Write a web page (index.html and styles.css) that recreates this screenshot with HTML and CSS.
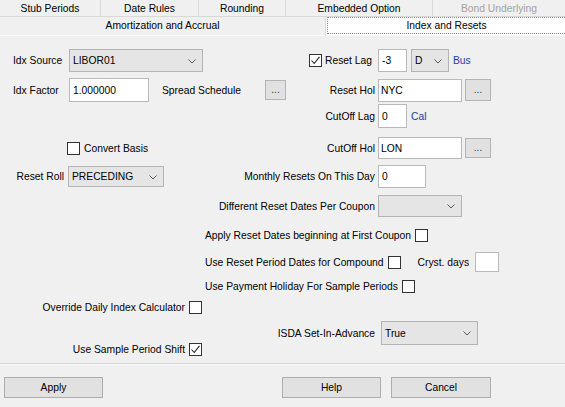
FILE: index.html
```html
<!DOCTYPE html>
<html>
	<head>
		<meta charset="UTF-8">
		<title>Index and Resets</title>
		<link rel="stylesheet" href="styles.css">
	</head>
	<body>
		<div class="tabs">
			<div class="tab_row tab_row--top">
				<div class="tab tab--stub">Stub Periods</div>
				<div class="tab tab--dates">Date Rules</div>
				<div class="tab tab--round">Rounding</div>
				<div class="tab tab--embedded">Embedded Option</div>
				<div class="tab tab--bond tab--disabled">Bond Underlying</div>
			</div>
			<div class="tab_row tab_row--bottom">
				<div class="tab tab--amort">Amortization and Accrual</div>
				<div class="tab tab--active"><span class="focus_box">Index and Resets</span></div>
			</div>
		</div>

		<div class="panel">
			<div class="row row--a">
				<div class="lead">
					<span class="lbl">Idx Source</span>
					<div class="combo combo--source">LIBOR01<svg class="chev" width="8" height="5" viewBox="0 0 8 5"><path d="M0.5 0.5 L4 4 L7.5 0.5" fill="none" stroke="#5a5a5a" stroke-width="1"/></svg></div>
					<div class="side_lbl side_lbl--check">
						<span class="chk"><svg width="11" height="11" viewBox="0 0 11 11"><path d="M1.5 5.5 L4.2 8.5 L9.5 1.8" fill="none" stroke="#222" stroke-width="1.1"/></svg></span>
						Reset Lag
					</div>
				</div>
				<div class="ctrls">
					<div class="field field--lag">-3</div>
					<div class="combo combo--unit">D<svg class="chev" width="8" height="5" viewBox="0 0 8 5"><path d="M0.5 0.5 L4 4 L7.5 0.5" fill="none" stroke="#5a5a5a" stroke-width="1"/></svg></div>
					<span class="note">Bus</span>
				</div>
			</div>

			<div class="row row--b">
				<div class="lead">
					<span class="lbl">Idx Factor</span>
					<div class="field field--factor">1.000000</div>
					<span class="lbl lbl--spread">Spread Schedule</span>
					<div class="btn_dots btn_dots--small">...</div>
					<span class="side_lbl">Reset Hol</span>
				</div>
				<div class="ctrls">
					<div class="field field--hol">NYC</div>
					<div class="btn_dots">...</div>
				</div>
			</div>

			<div class="row row--c">
				<div class="lead">
					<span class="side_lbl">CutOff Lag</span>
				</div>
				<div class="ctrls">
					<div class="field field--cutlag">0</div>
					<span class="note">Cal</span>
				</div>
			</div>

			<div class="row row--d">
				<div class="lead">
					<div class="check_item check_item--basis"><span class="chk"></span>Convert Basis</div>
					<span class="side_lbl">CutOff Hol</span>
				</div>
				<div class="ctrls">
					<div class="field field--lon">LON</div>
					<div class="btn_dots btn_dots--flat">...</div>
				</div>
			</div>

			<div class="row row--e">
				<div class="lead">
					<span class="lbl lbl--right">Reset Roll</span>
					<div class="combo combo--roll">PRECEDING<svg class="chev" width="8" height="5" viewBox="0 0 8 5"><path d="M0.5 0.5 L4 4 L7.5 0.5" fill="none" stroke="#5a5a5a" stroke-width="1"/></svg></div>
					<span class="side_lbl">Monthly Resets On This Day</span>
				</div>
				<div class="ctrls">
					<div class="field field--day">0</div>
				</div>
			</div>

			<div class="row row--f">
				<div class="lead">
					<span class="side_lbl">Different Reset Dates Per Coupon</span>
				</div>
				<div class="ctrls">
					<div class="combo combo--coupon"><svg class="chev" width="8" height="5" viewBox="0 0 8 5"><path d="M0.5 0.5 L4 4 L7.5 0.5" fill="none" stroke="#5a5a5a" stroke-width="1"/></svg></div>
				</div>
			</div>

			<div class="line line--g">
				<span>Apply Reset Dates beginning at First Coupon</span><span class="chk"></span>
			</div>
			<div class="line line--h">
				<span>Use Reset Period Dates for Compound</span><span class="chk"></span>
				<span class="cryst">Cryst. days</span>
				<div class="field field--cryst"></div>
			</div>
			<div class="line line--i">
				<span>Use Payment Holiday For Sample Periods</span><span class="chk"></span>
			</div>

			<div class="bottom">
				<div class="bottom_left">
					<div class="line_r">
						<span>Override Daily Index Calculator</span><span class="chk"></span>
					</div>
					<div class="line_r line_r--shift">
						<span>Use Sample Period Shift</span>
						<span class="chk"><svg width="11" height="11" viewBox="0 0 11 11"><path d="M1.5 5.5 L4.2 8.5 L9.5 1.8" fill="none" stroke="#222" stroke-width="1.1"/></svg></span>
					</div>
				</div>
				<div class="bottom_right">
					<span class="lbl lbl--isda">ISDA Set-In-Advance</span>
					<div class="combo combo--isda">True<svg class="chev" width="8" height="5" viewBox="0 0 8 5"><path d="M0.5 0.5 L4 4 L7.5 0.5" fill="none" stroke="#5a5a5a" stroke-width="1"/></svg></div>
				</div>
			</div>
		</div>

		<div class="footer">
			<div class="button button--apply">Apply</div>
			<div class="button button--help">Help</div>
			<div class="button button--cancel">Cancel</div>
		</div>
	</body>
</html>
```

FILE: styles.css
```css
body {
	margin: 0;
	width: 565px;
	height: 407px;
	overflow: hidden;
	background: #f0f0f0;
	font-family: "Liberation Sans", Arial, sans-serif;
	font-size: 10.3px;
	color: #000;
}

/* tabs */
.tabs {
	height: 36px;
}
.tab_row {
	display: flex;
}
.tab_row--top {
	height: 17px;
}
.tab_row--bottom {
	height: 19px;
}
.tab {
	box-sizing: border-box;
	border-right: 1px solid #d9d9d9;
	border-bottom: 1px solid #d9d9d9;
	text-align: center;
	line-height: 17px;
	white-space: nowrap;
}
.tab_row--bottom .tab {
	line-height: 18px;
	border-bottom-color: #fafafa;
}
.tab--stub { width: 101px; }
.tab--dates { width: 98px; }
.tab--round { width: 87px; }
.tab--embedded { width: 147px; }
.tab--bond { width: 132px; border-right: none; }
.tab--disabled {
	color: #a3a3a3;
}
.tab--amort { width: 326px; }
.tab--active {
	width: 239px;
	border-right: none;
	background: #fff;
	padding: 0 0 1px 1px;
}
.focus_box {
	display: block;
	box-sizing: border-box;
	height: 17px;
	line-height: 15px;
	border: 1px dotted #8a8a8a;
	border-right: none;
}

/* panel */
.panel {
	box-sizing: border-box;
	height: 328px;
	padding-top: 13px;
	border-bottom: 1px solid #d5d5d5;
	box-shadow: 0 1px 0 #fbfbfb;
}
.row {
	display: grid;
	grid-template-columns: 375px auto;
	column-gap: 3px;
	align-items: center;
}
.row--a { height: 23px; }
.row--b { height: 24px; margin-top: 6px; }
.row--c { height: 24px; margin-top: 2px; }
.row--d { height: 22px; margin-top: 9px; }
.row--e { height: 23px; margin-top: 6px; }
.row--f { height: 22px; margin-top: 7px; }

.lead {
	display: flex;
	align-items: center;
	padding-left: 13px;
	white-space: nowrap;
}
.ctrls {
	display: flex;
	align-items: center;
	white-space: nowrap;
}
.lbl {
	width: 51px;
	margin-right: 5px;
}
.lbl--right {
	text-align: right;
	margin-right: 4px;
}
.lbl--spread {
	width: 103px;
	margin-left: 13px;
	margin-right: 0;
}
.side_lbl {
	margin-left: auto;
}
.side_lbl--check {
	display: flex;
	align-items: center;
	margin-right: 3px;
}
.side_lbl--check .chk {
	margin-right: 3px;
}
.note {
	color: #1f3c9c;
	margin-left: 4px;
}

/* controls */
.field {
	box-sizing: border-box;
	background: #fff;
	border: 1px solid #b9b9b9;
	padding: 0 3px;
	display: flex;
	align-items: center;
}
.field--lag { width: 29px; height: 23px; }
.field--factor { width: 80px; height: 24px; }
.field--hol { width: 84px; height: 23px; padding-left: 2px; }
.field--cutlag { width: 29px; height: 24px; }
.field--lon { width: 84px; height: 22px; padding-left: 2px; }
.field--day { width: 48px; height: 23px; }
.field--cryst { width: 24px; height: 20px; margin-left: 6px; }

.combo {
	box-sizing: border-box;
	position: relative;
	background: #e5e5e5;
	border: 1px solid #b4b4b4;
	padding: 0 3px;
	display: flex;
	align-items: center;
}
.chev {
	position: absolute;
	right: 6px;
	top: calc(50% - 2px);
}
.combo--source { width: 134px; height: 23px; }
.combo--unit { width: 38px; height: 23px; margin-left: 4px; }
.combo--roll { width: 96px; height: 21px; }
.combo--coupon { width: 84px; height: 22px; }
.combo--isda { width: 97px; height: 24px; margin-left: 6px; }

.btn_dots {
	box-sizing: border-box;
	width: 26px;
	height: 22px;
	margin-left: 3px;
	background: #e1e1e1;
	border: 1px solid #b4b4b4;
	text-align: center;
	line-height: 20px;
	color: #333;
	font-size: 10px;
}
.btn_dots--small {
	width: 21px;
	height: 20px;
	line-height: 18px;
	margin-left: 0;
}
.btn_dots--flat {
	height: 20px;
	line-height: 18px;
}

.chk {
	box-sizing: border-box;
	display: inline-block;
	width: 13px;
	height: 13px;
	background: #fff;
	border: 1px solid #333;
	flex-shrink: 0;
}
.chk svg {
	display: block;
}
.check_item {
	display: flex;
	align-items: center;
}
.check_item .chk {
	margin-right: 4px;
}
.check_item--basis {
	margin-left: 54px;
}

/* single lines */
.line {
	display: flex;
	align-items: center;
	padding-left: 205px;
	white-space: nowrap;
}
.line .chk {
	margin-left: 4px;
}
.line--g { height: 14px; margin-top: 11px; }
.line--h { height: 20px; margin-top: 10px; }
.line--i { height: 14px; margin-top: 7px; }
.cryst {
	margin-left: 17px;
}

.bottom {
	display: flex;
	margin-top: 7px;
}
.bottom_left {
	width: 202px;
	display: flex;
	flex-direction: column;
	align-items: flex-end;
}
.line_r {
	display: flex;
	align-items: center;
	height: 14px;
	white-space: nowrap;
}
.line_r .chk {
	margin-left: 4px;
}
.line_r--shift {
	margin-top: 28px;
}
.bottom_right {
	display: flex;
	align-items: center;
	margin-top: 21px;
	height: 24px;
}
.lbl--isda {
	width: 173px;
	margin-right: 0;
	text-align: right;
}

/* footer */
.footer {
	display: flex;
	padding: 13px 0 0 4px;
}
.button {
	box-sizing: border-box;
	width: 99px;
	height: 21px;
	background: #e1e1e1;
	border: 1px solid #adadad;
	text-align: center;
	line-height: 19px;
}
.button--help {
	margin-left: 179px;
}
.button--cancel {
	width: 100px;
	margin-left: 10px;
}
```
